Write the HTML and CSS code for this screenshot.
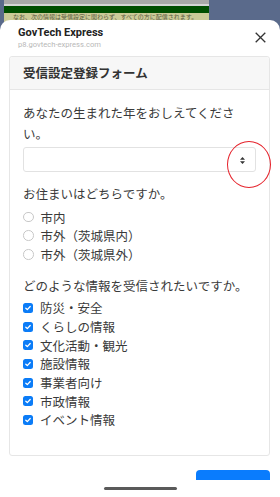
FILE: index.html
```html
<!DOCTYPE html>
<html lang="ja">
<head>
<meta charset="utf-8">
<title>GovTech Express</title>
<link rel="stylesheet" href="styles.css">
</head>
<body>
<div class="backdrop">
  <div class="bd-edge"></div>
  <div class="bd-page">
    <div class="bd-gray"></div>
    <div class="bd-line"></div>
    <div class="bd-green"></div>
    <div class="bd-khaki">なお、次の情報は受信設定に関わらず、すべての方に配信されます。</div>
  </div>
</div>
<div class="sheet">
  <div class="sheet-head">
    <div class="site">
      <div class="site-name">GovTech Express</div>
      <div class="site-url">p8.govtech-express.com</div>
    </div>
    <svg class="close" width="11" height="11" viewBox="0 0 11 11"><path d="M0.7 0.7 L10.3 10.3 M10.3 0.7 L0.7 10.3" stroke="#333" stroke-width="1.3" fill="none"/></svg>
  </div>
  <div class="card">
    <div class="card-head">受信設定登録フォーム</div>
    <div class="card-body">
      <div class="group g1">
        <p class="q">あなたの生まれた年をおしえてください。</p>
        <div class="select">
          <svg class="arrows" width="5" height="7" viewBox="0 0 5 7"><path d="M2.5 0 L5 2.7 L0 2.7 Z M2.5 7 L5 4.3 L0 4.3 Z" fill="#333"/></svg>
          <div class="mark"></div>
        </div>
      </div>
      <div class="group g2">
        <p class="q">お住まいはどちらですか。</p>
        <ul class="opts radios">
          <li><span class="radio"></span>市内</li>
          <li><span class="radio"></span>市外（茨城県内）</li>
          <li><span class="radio"></span>市外（茨城県外）</li>
        </ul>
      </div>
      <div class="group g3">
        <p class="q">どのような情報を受信されたいですか。</p>
        <ul class="opts checks">
          <li><span class="check"><svg width="10" height="10" viewBox="0 0 10 10"><path d="M2.8 5.2 L4.3 6.6 L7.2 3.5" stroke="#fff" stroke-width="1.3" fill="none" stroke-linecap="round" stroke-linejoin="round"/></svg></span>防災・安全</li>
          <li><span class="check"><svg width="10" height="10" viewBox="0 0 10 10"><path d="M2.8 5.2 L4.3 6.6 L7.2 3.5" stroke="#fff" stroke-width="1.3" fill="none" stroke-linecap="round" stroke-linejoin="round"/></svg></span>くらしの情報</li>
          <li><span class="check"><svg width="10" height="10" viewBox="0 0 10 10"><path d="M2.8 5.2 L4.3 6.6 L7.2 3.5" stroke="#fff" stroke-width="1.3" fill="none" stroke-linecap="round" stroke-linejoin="round"/></svg></span>文化活動・観光</li>
          <li><span class="check"><svg width="10" height="10" viewBox="0 0 10 10"><path d="M2.8 5.2 L4.3 6.6 L7.2 3.5" stroke="#fff" stroke-width="1.3" fill="none" stroke-linecap="round" stroke-linejoin="round"/></svg></span>施設情報</li>
          <li><span class="check"><svg width="10" height="10" viewBox="0 0 10 10"><path d="M2.8 5.2 L4.3 6.6 L7.2 3.5" stroke="#fff" stroke-width="1.3" fill="none" stroke-linecap="round" stroke-linejoin="round"/></svg></span>事業者向け</li>
          <li><span class="check"><svg width="10" height="10" viewBox="0 0 10 10"><path d="M2.8 5.2 L4.3 6.6 L7.2 3.5" stroke="#fff" stroke-width="1.3" fill="none" stroke-linecap="round" stroke-linejoin="round"/></svg></span>市政情報</li>
          <li><span class="check"><svg width="10" height="10" viewBox="0 0 10 10"><path d="M2.8 5.2 L4.3 6.6 L7.2 3.5" stroke="#fff" stroke-width="1.3" fill="none" stroke-linecap="round" stroke-linejoin="round"/></svg></span>イベント情報</li>
        </ul>
      </div>
    </div>
  </div>
  <div class="footer">
    <div class="submit"></div>
  </div>
  <div class="home-bar"><div class="indicator"></div></div>
</div>
</body>
</html>
```
FILE: styles.css
```css
html, body {
  margin: 0;
  padding: 0;
  height: 497px;
  overflow: hidden;
}
body {
  background: #5a6a8b;
  font-family: "Noto Sans CJK JP", "Noto Sans", sans-serif;
  color: #333;
}
.backdrop {
  display: flex;
  height: 30px;
}
.bd-edge { width: 4px; }
.bd-page {
  width: 205px;
  display: flex;
  flex-direction: column;
  background: #cdcd9c;
}
.bd-gray { height: 4px; background: #a9a9a9; }
.bd-line { height: 2px; background: #d5d5d5; }
.bd-green { height: 7px; background: #004e00; }
.bd-khaki {
  flex: 1;
  background: #cbcb98;
  font-size: 6px;
  line-height: 7px;
  color: #5a5a40;
  padding-left: 9px;
  white-space: nowrap;
  overflow: hidden;
}
.sheet {
  position: relative;
  z-index: 1;
  margin-top: -10px;
  background: #fff;
  border-radius: 10px 10px 0 0;
  height: 477px;
  overflow: hidden;
}
.sheet-head {
  display: flex;
  justify-content: space-between;
  align-items: flex-start;
  padding: 6px 14px 0 18px;
  height: 30px;
}
.site-name {
  font-family: Roboto, "Liberation Sans", sans-serif;
  font-weight: 700;
  font-size: 11px;
  line-height: 14px;
  color: #222;
}
.site-url {
  font-family: Roboto, "Liberation Sans", sans-serif;
  font-size: 7.6px;
  line-height: 10px;
  color: #b8b8b8;
}
.close { margin-top: 6px; }
.card {
  margin: 0 10px 0 9px;
  border: 1px solid #e6e6e6;
  border-radius: 3px;
}
.card-head {
  height: 32px;
  line-height: 32px;
  padding-left: 13px;
  background: #f7f7f7;
  border-bottom: 1px solid #e6e6e6;
  font-size: 12.5px;
  font-weight: 700;
  color: #333;
  border-radius: 3px 3px 0 0;
}
.card-body {
  padding: 12px 13px 25.6px 13px;
}
.q {
  margin: 0;
  font-size: 12.5px;
  line-height: 21px;
  color: #3a3a3a;
}
.select {
  position: relative;
  margin-top: 3px;
  height: 23px;
  border: 1px solid #e2e2e2;
  border-radius: 3px;
  background: #fff;
}
.arrows {
  position: absolute;
  right: 10px;
  top: 8.5px;
}
.mark {
  position: absolute;
  left: 203px;
  top: -7px;
  width: 42px;
  height: 45px;
  border: 1.6px solid #e5222b;
  border-radius: 50%;
}
.g1 { margin-bottom: 10.5px; }
.g2 { margin-bottom: 11.3px; }
.opts {
  list-style: none;
  margin: 0;
  padding: 0;
}
.radios { margin-top: 4.2px; }
.checks { margin-top: 2.7px; }
.opts li {
  display: flex;
  align-items: center;
  height: 18.67px;
  font-size: 12.5px;
  color: #3a3a3a;
}
.radio {
  width: 8.5px;
  height: 8.5px;
  border: 1px solid #c8c8c8;
  border-radius: 50%;
  margin-right: 7px;
  background: #fff;
}
.check {
  width: 10px;
  height: 10px;
  border-radius: 2.5px;
  background: #0b7cf7;
  margin-right: 7px;
  display: flex;
}
.footer {
  display: flex;
  justify-content: flex-end;
  padding: 14px 10px 0 0;
}
.submit {
  width: 74px;
  height: 30px;
  background: #0a7cfd;
  border-radius: 4px;
}
.home-bar {
  position: absolute;
  left: 0;
  right: 0;
  bottom: 0;
  height: 17px;
  background: #fff;
  display: flex;
  justify-content: center;
}
.indicator {
  margin-top: 7px;
  width: 73px;
  height: 2.5px;
  border-radius: 2px;
  background: #5a5a5a;
}
```
